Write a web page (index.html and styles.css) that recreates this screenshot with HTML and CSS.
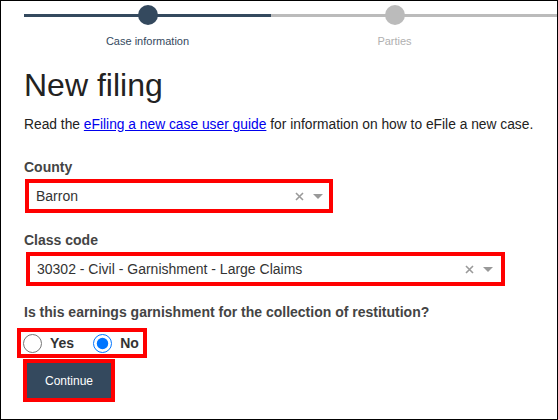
FILE: index.html
```html
<!DOCTYPE html>
<html lang="en">
<head>
  <meta charset="UTF-8">
  <title>New filing</title>
  <meta name="viewport" content="width=device-width, initial-scale=1.0">
  <link rel="stylesheet" href="styles.css">
</head>
<body>
  <div class="page">
    <div class="stepper">
      <div class="step done">
        <div class="step-dot"></div>
        <div class="step-label">Case information</div>
      </div>
      <div class="step">
        <div class="step-dot"></div>
        <div class="step-label">Parties</div>
      </div>
      <div class="step">
        <div class="step-dot"></div>
      </div>
    </div>

    <div class="content">
      <h1>New filing</h1>
      <p class="intro">Read the <a href="#">eFiling a new case user guide</a> for information on how to eFile a new case.</p>

      <label class="field-label">County</label>
      <div class="select county">
        <span class="select-value">Barron</span>
        <svg class="select-clear" width="9" height="9" viewBox="0 0 9 9"><path d="M1 1L8 8M8 1L1 8" stroke="#9a9a9a" stroke-width="1.6"/></svg>
        <span class="select-arrow"></span>
      </div>

      <label class="field-label class-label">Class code</label>
      <div class="select class-code">
        <span class="select-value">30302 - Civil - Garnishment - Large Claims</span>
        <svg class="select-clear" width="9" height="9" viewBox="0 0 9 9"><path d="M1 1L8 8M8 1L1 8" stroke="#9a9a9a" stroke-width="1.6"/></svg>
        <span class="select-arrow"></span>
      </div>

      <label class="field-label question">Is this earnings garnishment for the collection of restitution?</label>
      <div class="radios">
        <label class="radio"><input type="radio" name="restitution"> Yes</label>
        <label class="radio"><input type="radio" name="restitution" checked> No</label>
      </div>

      <div class="button-wrap">
        <button class="continue">Continue</button>
      </div>
    </div>
  </div>
</body>
</html>
```

FILE: styles.css
```css
body {
  margin: 0;
  font-family: "Liberation Sans", Arial, sans-serif;
  color: #333;
  background: #fff;
}
.page {
  width: 558px;
  height: 420px;
  box-sizing: border-box;
  border: 1px solid #000;
  overflow: hidden;
}
.stepper {
  display: flex;
  margin-left: 23px;
  padding-top: 4px;
}
.step {
  flex: 0 0 247px;
  text-align: center;
  background: linear-gradient(#bbb, #bbb) 0 9px / 100% 3px no-repeat;
}
.step.done {
  background-image: linear-gradient(#34495e, #34495e);
}
.step-dot {
  width: 20px;
  height: 20px;
  margin: 0 auto;
  border-radius: 50%;
  background: #bbb;
}
.step.done .step-dot {
  background: #34495e;
}
.step-label {
  margin-top: 10px;
  font-size: 11px;
  line-height: 13px;
  color: #b0b0b0;
}
.step.done .step-label {
  color: #34495e;
}
.content {
  padding: 0 16px 0 23px;
}
h1 {
  margin: 18px 0 0;
  font-size: 32px;
  font-weight: normal;
  line-height: 38px;
  color: #222;
}
.intro {
  margin: 11px 0 0;
  font-size: 13.8px;
  line-height: 20px;
  color: #222;
  white-space: nowrap;
}
.intro a {
  color: #0000ee;
}
.field-label {
  display: block;
  margin: 24px 0 4px;
  font-size: 14px;
  font-weight: bold;
  line-height: 16px;
  color: #444;
}
.class-label {
  margin-top: 19px;
}
.question {
  margin-top: 18px;
  margin-bottom: 8px;
}
.select {
  display: flex;
  align-items: center;
  box-sizing: border-box;
  height: 34px;
  margin-left: 1px;
  padding: 0 6px 0 7px;
  border: 4px solid #f00;
  font-size: 14px;
  color: #333;
}
.select.county {
  width: 308px;
}
.select.class-code {
  width: 479px;
  margin-left: 2px;
  padding-right: 8px;
}
.select-value {
  flex: 1;
}
.select-clear {
  margin-right: 9px;
}
.select-arrow {
  width: 0;
  height: 0;
  border-left: 5px solid transparent;
  border-right: 5px solid transparent;
  border-top: 5px solid #999;
}
.radios {
  display: inline-flex;
  align-items: center;
  box-sizing: border-box;
  height: 30px;
  margin-left: -7px;
  padding: 0 4px 0 2px;
  border: 4px solid #f00;
}
.radio {
  display: flex;
  align-items: center;
  font-size: 14px;
  font-weight: bold;
  color: #333;
}
.radio + .radio {
  margin-left: 19px;
}
.radio input {
  width: 19px;
  height: 19px;
  margin: 0 8px 0 0;
}
.button-wrap {
  display: table;
  margin: 1px 0 0 -1px;
  border: 4px solid #f00;
}
.continue {
  display: block;
  width: 84px;
  height: 35px;
  border: none;
  background: #34495e;
  color: #fff;
  font-family: "Liberation Sans", Arial, sans-serif;
  font-size: 12px;
}
```
